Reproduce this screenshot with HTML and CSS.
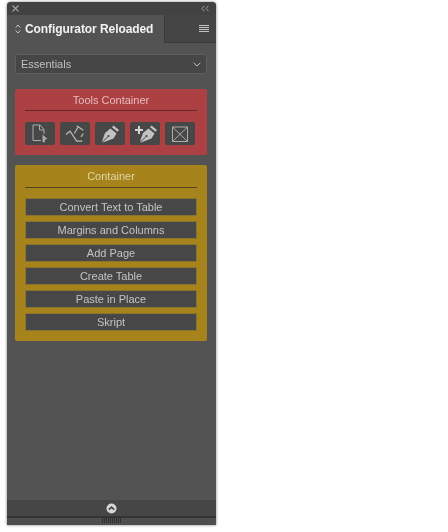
FILE: index.html
```html
<!DOCTYPE html>
<html lang="en">
<head>
<meta charset="utf-8">
<title>Configurator Reloaded</title>
<link rel="stylesheet" href="styles.css">
</head>
<body>
<div class="panel">
  <div class="topbar">
    <svg class="icon-close" width="7" height="7" viewBox="0 0 7 7"><path d="M.5.5l6 6M6.5.5l-6 6"/></svg>
    <svg class="icon-collapse" width="8" height="7" viewBox="0 0 8 7"><path d="M3.4.8L1 3.5l2.4 2.7M7.4.8L5 3.5l2.4 2.7"/></svg>
  </div>
  <div class="tabrow">
    <div class="tab">
      <svg class="icon-updown" width="6" height="10" viewBox="0 0 6 10"><path d="M.7 3.6L3 1l2.3 2.6M.7 6.4L3 9l2.3-2.6"/></svg>
      <span class="tab-title">Configurator Reloaded</span>
    </div>
    <div class="tab-rest">
      <svg class="icon-menu" width="10" height="8" viewBox="0 0 10 8"><path d="M0 .5h10M0 2.500h10M0 4.500h10M0 6.500h10"/></svg>
    </div>
  </div>
  <div class="content">
    <div class="select">
      <span>Essentials</span>
      <svg class="icon-chevron" width="8" height="5" viewBox="0 0 8 5"><path d="M.6.8L4 4l3.4-3.2"/></svg>
    </div>
    <section class="box box-red">
      <h2 class="box-title">Tools Container</h2>
      <div class="tools">
        <button class="tool"><svg width="24" height="22" viewBox="0 0 24 22"><path class="ln" d="M13 17.500H5V2h7l4 4.500v4.500M11.500 2v5H16"/><path class="fill-soft" d="M14.500 11.500l5 4.500-2.300.4-.5 3.100-2.200-.6z"/></svg></button>
        <button class="tool"><svg width="24" height="22" viewBox="0 0 24 22"><path class="ln-strong" d="M3 11.500L7 8.200l6.700 10h5.600M11.300 10.500l4-6.700M13.700 2.800l6.600 4.400M18 13.800l2.300-3.300"/></svg></button>
        <button class="tool"><svg width="24" height="22" viewBox="0 0 24 22"><path class="fill" d="M15.500 2.500L21 7l-1.500 1.700L14 4.200zM12.500 5.500l6 5-3 5L5 19.500l-1-1L7 10z"/><path class="slit" d="M4.500 19l5.500-5.500"/><circle class="slit-dot" cx="10.500" cy="13" r="1.100"/></svg></button>
        <button class="tool"><svg width="24" height="22" viewBox="0 0 24 22"><path class="fill" d="M18.500 2.500L24 7l-1.500 1.700L17 4.200zM15.500 5.500l6 5-3 5L8 19.500l-1-1L10 10z"/><path class="slit" d="M7.500 19l5.500-5.500"/><circle class="slit-dot" cx="13.500" cy="13" r="1.100"/><path class="ln-b" d="M2 7h8M6 3v8"/></svg></button>
        <button class="tool"><svg width="24" height="22" viewBox="0 0 24 22"><path class="ln" d="M4.500 4h15v14.500h-15zM4.500 4l15 14.500M19.500 4l-15 14.500"/></svg></button>
      </div>
    </section>
    <section class="box box-yellow">
      <h2 class="box-title">Container</h2>
      <div class="actions">
        <button class="action">Convert Text to Table</button>
        <button class="action">Margins and Columns</button>
        <button class="action">Add Page</button>
        <button class="action">Create Table</button>
        <button class="action">Paste in Place</button>
        <button class="action">Skript</button>
      </div>
    </section>
  </div>
  <div class="footer">
    <svg width="11" height="11" viewBox="0 0 11 11"><circle cx="5.500" cy="5.500" r="5" fill="#d6d6d6"/><path d="M2.800 6.600l2.700-2.500 2.700 2.500" fill="none" stroke="#444" stroke-width="1.600"/></svg>
  </div>
  <div class="grip"><span class="grip-marks"></span></div>
</div>
</body>
</html>
```
FILE: styles.css
```css
* { box-sizing: border-box; }
html, body { margin: 0; background: #fff; }
body { height: 532px; overflow: hidden; padding: 2px 0 0 7px; font-family: "Liberation Sans", Arial, sans-serif; }
.panel { width: 209px; height: 523px; display: flex; flex-direction: column; background: #535353; border-radius: 4px 4px 0 0; box-shadow: 0 0 3px rgba(0,0,0,.55); overflow: hidden; will-change: transform; }
.topbar { height: 13px; flex: none; background: #424242; display: flex; align-items: center; justify-content: space-between; padding: 0 7px 0 5px; }
.topbar svg, .tabrow svg, .select svg { fill: none; stroke-width: 1; }
.icon-close { stroke: #a0a0a0; stroke-width: 1.2 !important; }
.icon-collapse { stroke: #a0a0a0; }
.tabrow { height: 28px; flex: none; display: flex; }
.tab { width: 157px; display: flex; align-items: center; gap: 4px; padding: 0 0 0 8px; background: #535353; }
.icon-updown { stroke: #c4c4c4; }
.tab-title { font-size: 12px; font-weight: 700; color: #f2f2f2; white-space: nowrap; letter-spacing: -.08px; }
.tab-rest { flex: 1; background: #454545; border-left: 1px solid #3a3a3a; border-bottom: 1px solid #3a3a3a; display: flex; align-items: center; justify-content: flex-end; padding: 0 7px 0 0; }
.icon-menu { stroke: #c2c2c2; }
.content { flex: 1; min-height: 0; padding: 11px 9px 0 8px; display: flex; flex-direction: column; }
.select { height: 20px; flex: none; display: flex; align-items: center; justify-content: space-between; padding: 0 5px; background: #464646; border: 1px solid #5e5e5e; border-radius: 3px; font-size: 11px; color: #c0c0c0; }
.icon-chevron { stroke: #c0c0c0; }
.box { border-radius: 2px; padding: 0 10px; }
.box-red { margin-top: 15px; height: 66px; background: #ad4042; }
.box-yellow { margin-top: 10px; height: 176px; background: #a6831b; }
.box-title { margin: 0; height: 22px; display: flex; align-items: center; justify-content: center; font-size: 11px; font-weight: 400; border-bottom: 1px solid; }
.box-red .box-title { color: #e6bcbc; border-color: #6a2729; }
.box-yellow .box-title { height: 23px; color: #e0d5ab; border-color: #4f431b; }
.tools { display: flex; justify-content: space-between; gap: 5px; padding: 11px 0 0; width: 170px; }
.tool { width: 30px; height: 23px; padding: 0; border: 0; border-radius: 2px; background: #474747; display: flex; align-items: center; justify-content: center; }
.ln { fill: none; stroke: #adadad; stroke-width: 1; }
.ln-strong { fill: none; stroke: #bcbcbc; stroke-width: 1.2; }
.ln-b { fill: none; stroke: #d4d4d4; stroke-width: 2; }
.fill { fill: #c2c2c2; }
.fill-soft { fill: #a8a8a8; }
.slit { fill: none; stroke: #474747; stroke-width: 1; }
.slit-dot { fill: #474747; }
.actions { display: flex; flex-direction: column; gap: 5px; padding: 10px 0 0; }
.action { height: 18px; padding: 0; border: 1px solid #8a7230; border-radius: 1px; background: #474747; color: #c4c4c4; font: 400 11px "Liberation Sans", Arial, sans-serif; }
.footer { height: 16px; flex: none; background: #464646; display: flex; align-items: center; justify-content: center; }
.grip { height: 9px; flex: none; background: #4e4e4e; border-top: 2px solid #333; display: flex; justify-content: center; }
.grip-marks { width: 20px; height: 5px; background: repeating-linear-gradient(90deg, #2e2e2e 0 1px, transparent 1px 2px); }
```
